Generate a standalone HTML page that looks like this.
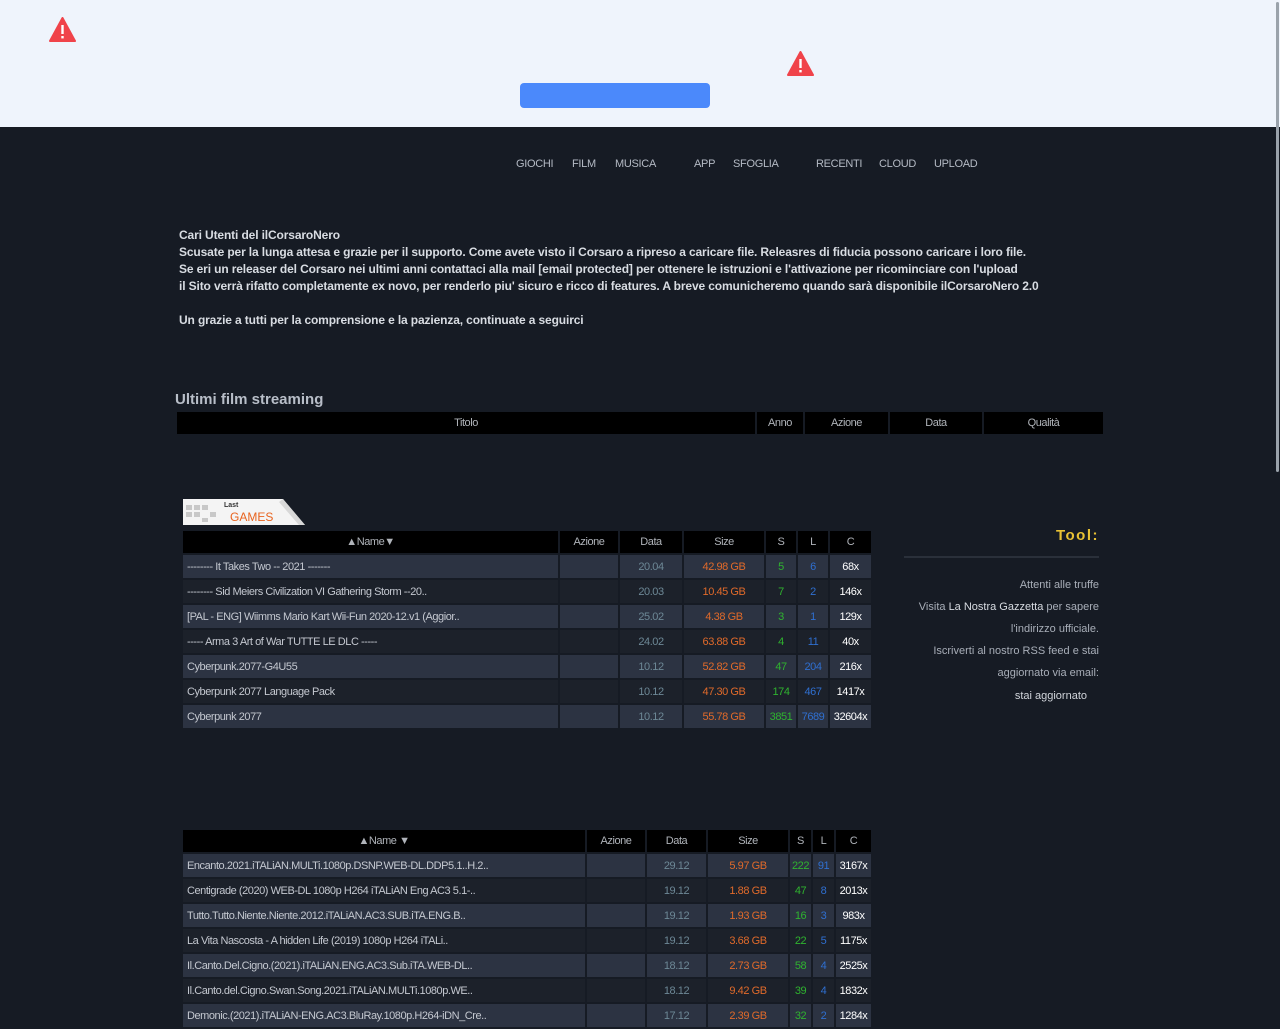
<!DOCTYPE html>
<html><head><meta charset="utf-8"><style>
*{margin:0;padding:0;box-sizing:border-box}
body{width:1280px;height:1024px;overflow:hidden;background:#161b24;font-family:"Liberation Sans",sans-serif;position:relative}
.top{position:absolute;left:0;top:0;width:1280px;height:127px;background:#eff4fc}
.warn{position:absolute}
.btn{position:absolute;left:520px;top:83px;width:190px;height:25px;background:#4b89fb;border-radius:4px}
.nav{position:absolute;top:158px;font-size:11px;color:#b4bac4;letter-spacing:-0.3px}
.msg{position:absolute;left:179px;top:227px;font-size:12px;font-weight:bold;color:#d8dce2;line-height:17px;letter-spacing:-0.13px}
h2{position:absolute;left:175px;top:391px;font-size:15px;color:#b8bec8;font-weight:bold}
table{position:absolute;border-collapse:separate;border-spacing:2px;table-layout:fixed;font-size:11px;letter-spacing:-0.45px}
th{background:#000;color:#b0b4ba;font-weight:normal;height:22px;text-align:center}
td{height:23px;text-align:center;color:#d0d4da;white-space:nowrap;overflow:hidden}
td.n{text-align:left;padding-left:4px;color:#c4c8d0}
tr.o td{background:#2c3342}
tr.e td{background:#1c212a}
.d{color:#6d8896!important}.s{color:#e06a2a!important}.g{color:#2fb32f!important}.b{color:#2f6fd0!important}.c{color:#fff!important}
.tool{position:absolute;left:905px;width:194px;text-align:right;font-size:11px;color:#a8aeb8}
</style></head><body>
<div class="top"></div>
<svg class="warn" style="left:49px;top:17px" width="27" height="25" viewBox="0 0 27 25"><path d="M13.5 1 L26 24 H1 Z" fill="#f0434a" stroke="#f0434a" stroke-linejoin="round" stroke-width="2"/><rect x="12.3" y="8" width="2.4" height="9" fill="#fff"/><rect x="12.3" y="19" width="2.4" height="2.4" fill="#fff"/></svg>
<svg class="warn" style="left:787px;top:51px" width="27" height="25" viewBox="0 0 27 25"><path d="M13.5 1 L26 24 H1 Z" fill="#f0434a" stroke="#f0434a" stroke-linejoin="round" stroke-width="2"/><rect x="12.3" y="8" width="2.4" height="9" fill="#fff"/><rect x="12.3" y="19" width="2.4" height="2.4" fill="#fff"/></svg>
<div class="btn"></div>
<div style="position:absolute;left:1276px;top:2px;width:3px;height:470px;background:#9aa2ab;border-radius:2px"></div>
<span class="nav" style="left:516px">GIOCHI</span><span class="nav" style="left:572px">FILM</span><span class="nav" style="left:615px">MUSICA</span><span class="nav" style="left:694px">APP</span><span class="nav" style="left:733px">SFOGLIA</span><span class="nav" style="left:816px">RECENTI</span><span class="nav" style="left:879px">CLOUD</span><span class="nav" style="left:934px">UPLOAD</span>
<div class="msg">Cari Utenti del ilCorsaroNero<br>Scusate per la lunga attesa e grazie per il supporto. Come avete visto il Corsaro a ripreso a caricare file. Releasres di fiducia possono caricare i loro file.<br>Se eri un releaser del Corsaro nei ultimi anni contattaci alla mail [email protected] per ottenere le istruzioni e l'attivazione per ricominciare con l'upload<br>il Sito verrà rifatto completamente ex novo, per renderlo piu' sicuro e ricco di features. A breve comunicheremo quando sarà disponibile ilCorsaroNero 2.0<br><br>Un grazie a tutti per la comprensione e la pazienza, continuate a seguirci</div>
<h2>Ultimi film streaming</h2>
<table style="left:175px;top:410px;width:930px"><colgroup><col width="578"><col width="46"><col width="83"><col width="92"><col width="119"></colgroup><tr><th>Titolo</th><th>Anno</th><th>Azione</th><th>Data</th><th>Qualità</th></tr></table>
<div style="position:absolute;left:183px;top:499px;width:122px;height:26px">
<svg width="122" height="26"><path d="M0 0 H100 L122 26 H0 Z" fill="#f4f4f4"/><path d="M100 0 L122 26 H116 L96 3Z" fill="#d8d8d8"/><g fill="#c8c8c8"><rect x="3" y="6" width="6" height="5"/><rect x="11" y="6" width="6" height="5"/><rect x="19" y="6" width="6" height="5"/><rect x="3" y="13" width="6" height="5"/><rect x="11" y="13" width="6" height="5"/><rect x="27" y="13" width="6" height="5"/><rect x="19" y="19" width="6" height="4"/></g></svg>
<span style="position:absolute;left:41px;top:3px;font-size:7px;color:#333;font-weight:bold">Last</span><span style="position:absolute;left:47px;top:11px;font-size:12px;color:#e8631e">GAMES</span></div>
<table style="left:181px;top:529px;width:692px"><colgroup><col width="375"><col width="58"><col width="62"><col width="80"><col width="30"><col width="30"><col width="41"></colgroup>
<tr><th>▲Name▼</th><th>Azione</th><th>Data</th><th>Size</th><th>S</th><th>L</th><th>C</th></tr>
<tr class="o"><td class="n">-------- It Takes Two -- 2021 -------</td><td></td><td class="d">20.04</td><td class="s">42.98 GB</td><td class="g">5</td><td class="b">6</td><td class="c">68x</td></tr>
<tr class="e"><td class="n">-------- Sid Meiers Civilization VI Gathering Storm --20..</td><td></td><td class="d">20.03</td><td class="s">10.45 GB</td><td class="g">7</td><td class="b">2</td><td class="c">146x</td></tr>
<tr class="o"><td class="n">[PAL - ENG] Wiimms Mario Kart Wii-Fun 2020-12.v1 (Aggior..</td><td></td><td class="d">25.02</td><td class="s">4.38 GB</td><td class="g">3</td><td class="b">1</td><td class="c">129x</td></tr>
<tr class="e"><td class="n">----- Arma 3 Art of War TUTTE LE DLC -----</td><td></td><td class="d">24.02</td><td class="s">63.88 GB</td><td class="g">4</td><td class="b">11</td><td class="c">40x</td></tr>
<tr class="o"><td class="n">Cyberpunk.2077-G4U55</td><td></td><td class="d">10.12</td><td class="s">52.82 GB</td><td class="g">47</td><td class="b">204</td><td class="c">216x</td></tr>
<tr class="e"><td class="n">Cyberpunk 2077 Language Pack</td><td></td><td class="d">10.12</td><td class="s">47.30 GB</td><td class="g">174</td><td class="b">467</td><td class="c">1417x</td></tr>
<tr class="o"><td class="n">Cyberpunk 2077</td><td></td><td class="d">10.12</td><td class="s">55.78 GB</td><td class="g">3851</td><td class="b">7689</td><td class="c">32604x</td></tr>
</table>
<div class="tool" style="top:527px;font-size:15px;font-weight:bold;color:#e8c234;letter-spacing:1.5px">Tool:</div>
<div style="position:absolute;left:904px;top:556px;width:195px;height:2px;background:#2a303a"></div>
<div class="tool" style="top:579px">Attenti alle truffe</div>
<div class="tool" style="top:601px">Visita <span style="color:#d8dce2">La Nostra Gazzetta</span> per sapere</div>
<div class="tool" style="top:623px">l'indirizzo ufficiale.</div>
<div class="tool" style="top:645px">Iscriverti al nostro RSS feed e stai</div>
<div class="tool" style="top:667px">aggiornato via email:</div>
<div class="tool" style="top:690px;width:182px;color:#d0d4da">stai aggiornato</div>
<table style="left:181px;top:828px;width:692px"><colgroup><col width="402"><col width="58"><col width="59"><col width="80"><col width="21"><col width="21"><col width="35"></colgroup>
<tr><th>▲Name ▼</th><th>Azione</th><th>Data</th><th>Size</th><th>S</th><th>L</th><th>C</th></tr>
<tr class="o"><td class="n">Encanto.2021.iTALiAN.MULTi.1080p.DSNP.WEB-DL.DDP5.1..H.2..</td><td></td><td class="d">29.12</td><td class="s">5.97 GB</td><td class="g">222</td><td class="b">91</td><td class="c">3167x</td></tr>
<tr class="e"><td class="n">Centigrade (2020) WEB-DL 1080p H264 iTALiAN Eng AC3 5.1-..</td><td></td><td class="d">19.12</td><td class="s">1.88 GB</td><td class="g">47</td><td class="b">8</td><td class="c">2013x</td></tr>
<tr class="o"><td class="n">Tutto.Tutto.Niente.Niente.2012.iTALiAN.AC3.SUB.iTA.ENG.B..</td><td></td><td class="d">19.12</td><td class="s">1.93 GB</td><td class="g">16</td><td class="b">3</td><td class="c">983x</td></tr>
<tr class="e"><td class="n">La Vita Nascosta - A hidden Life (2019) 1080p H264 iTALi..</td><td></td><td class="d">19.12</td><td class="s">3.68 GB</td><td class="g">22</td><td class="b">5</td><td class="c">1175x</td></tr>
<tr class="o"><td class="n">Il.Canto.Del.Cigno.(2021).iTALiAN.ENG.AC3.Sub.iTA.WEB-DL..</td><td></td><td class="d">18.12</td><td class="s">2.73 GB</td><td class="g">58</td><td class="b">4</td><td class="c">2525x</td></tr>
<tr class="e"><td class="n">Il.Canto.del.Cigno.Swan.Song.2021.iTALiAN.MULTi.1080p.WE..</td><td></td><td class="d">18.12</td><td class="s">9.42 GB</td><td class="g">39</td><td class="b">4</td><td class="c">1832x</td></tr>
<tr class="o"><td class="n">Demonic.(2021).iTALiAN-ENG.AC3.BluRay.1080p.H264-iDN_Cre..</td><td></td><td class="d">17.12</td><td class="s">2.39 GB</td><td class="g">32</td><td class="b">2</td><td class="c">1284x</td></tr>
</table>
</body></html>
